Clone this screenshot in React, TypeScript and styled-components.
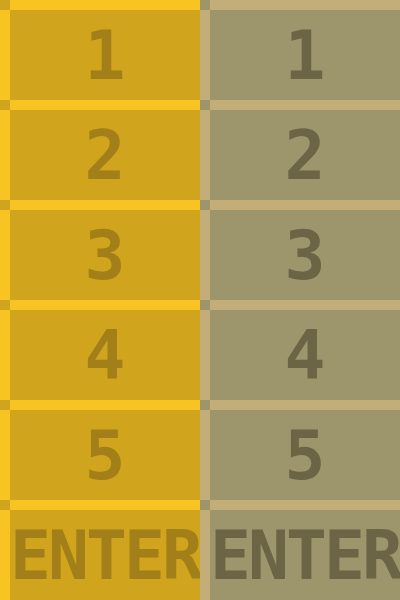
import styled, { createGlobalStyle } from "styled-components";

const GlobalStyle = createGlobalStyle`
  html, body {
    margin: 0;
    padding: 0;
    width: 400px;
    height: 600px;
    overflow: hidden;
  }
`;

interface Palette {
  line: string;
  cell: string;
  ink: string;
}

const yellow: Palette = { line: "#f7c423", cell: "#d0a41d", ink: "#a27f18" };
const olive: Palette = { line: "#c3ae7a", cell: "#9d956c", ink: "#6b6546" };

const Pad = styled.div`
  display: flex;
  width: 400px;
  height: 600px;
`;

const Column = styled.div`
  display: flex;
  flex-direction: column;
  width: 200px;
`;

// the corner square keeps the cell colour, so the left bar starts 10px down
const Row = styled.div<{ $p: Palette }>`
  display: flex;
  height: 100px;
  background: ${({ $p }) => $p.cell};

  &::before {
    content: "";
    width: 10px;
    margin-top: 10px;
    background: ${({ $p }) => $p.line};
  }
`;

const Key = styled.div<{ $p: Palette }>`
  flex: 1;
  min-width: 0;
  display: flex;
  align-items: center;
  justify-content: center;
  border-top: 10px solid ${({ $p }) => $p.line};
  color: ${({ $p }) => $p.ink};
  font-family: "DejaVu Sans Mono", "Liberation Mono", monospace;
  font-weight: bold;
  font-size: 68px;
  line-height: 1;
  white-space: nowrap;
  user-select: none;
`;

const Label = styled.span<{ $wide?: boolean }>`
  display: block;
  padding-top: 2px;
  letter-spacing: ${({ $wide }) => ($wide ? "-2.9px" : "0")};
`;

const keys = ["1", "2", "3", "4", "5", "ENTER"];

const Keypad = ({ p }: { p: Palette }) => (
  <Column>
    {keys.map((k) => (
      <Row key={k} $p={p}>
        <Key $p={p}>
          <Label $wide={k.length > 1}>{k}</Label>
        </Key>
      </Row>
    ))}
  </Column>
);

export default function App() {
  return (
    <>
      <GlobalStyle />
      <Pad>
        <Keypad p={yellow} />
        <Keypad p={olive} />
      </Pad>
    </>
  );
}
